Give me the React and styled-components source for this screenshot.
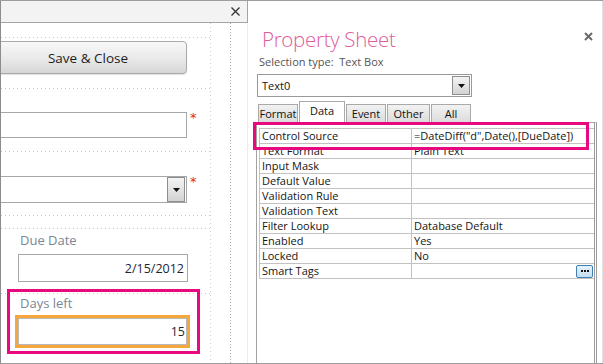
import React from "react";
import styled, { createGlobalStyle } from "styled-components";

const Global = createGlobalStyle`
  html, body { margin: 0; padding: 0; background: #fff; overflow: hidden; }
  body { font-family: "Open Sans", "Noto Sans", sans-serif; color: #151515; }
  * { box-sizing: border-box; }
`;

const Frame = styled.div`
  position: relative;
  width: 603px;
  height: 364px;
  border-top: 1px solid #9d9d9d;
  border-bottom: 1px solid #9d9d9d;
  display: flex;
  overflow: hidden;
  background: #fff;
`;

/* ---------- left: form design surface ---------- */
const LeftPane = styled.div`
  width: 248px;
  flex-shrink: 0;
  border-left: 1px solid #8d8d8d;
  display: flex;
  flex-direction: column;
`;

const PaneBar = styled.div`
  height: 22px;
  flex-shrink: 0;
  background: #f3f3f3;
  border-bottom: 1px solid #a4a4a4;
  border-right: 1px solid #a4a4a4;
  display: flex;
  align-items: center;
  justify-content: flex-end;
  padding-right: 7px;
`;

const Design = styled.div`
  flex: 1;
  display: flex;
  overflow: hidden;
`;

const FormCol = styled.div`
  width: 209px;
  flex-shrink: 0;
  display: flex;
  flex-direction: column;
`;

const Gutter = styled.div`
  width: 21px;
  flex-shrink: 0;
  background-image:
    linear-gradient(to bottom, #cfcfcf 1px, transparent 1px),
    linear-gradient(to bottom, #a9a9a9 1px, transparent 1px);
  background-size: 1px 4px, 1px 3px;
  background-position: left top, right top;
  background-repeat: repeat-y;
`;

const Rest = styled.div`
  flex: 1;
  border-right: 1px solid #ededed;
`;

const Rule = styled.div`
  height: 1px;
  flex-shrink: 0;
  margin-top: ${(p) => p.$mt}px;
  background-image: linear-gradient(to right, #c9c9c9 1px, transparent 1px);
  background-size: 4px 1px;
  background-repeat: repeat-x;
`;

const CmdButton = styled.div`
  margin-top: ${(p) => p.$mt}px;
  margin-left: -6px;
  width: 192px;
  height: 33px;
  flex-shrink: 0;
  border: 1px solid #a9a9a9;
  border-radius: 4px;
  background: linear-gradient(#f8f8f8, #e9e9e9 55%, #d6d6d6);
  box-shadow: 0 1px 1px rgba(0, 0, 0, 0.12);
  display: flex;
  align-items: center;
  justify-content: center;
  padding-right: 6px;
  font-size: 13.5px;
  color: #1e1e1e;
`;

const FieldRow = styled.div`
  display: flex;
  align-items: flex-start;
  flex-shrink: 0;
  margin-top: ${(p) => p.$mt}px;
`;

const TextBox = styled.div`
  position: relative;
  margin-left: ${(p) => p.$ml}px;
  width: ${(p) => p.$w}px;
  height: ${(p) => p.$h}px;
  flex-shrink: 0;
  border: ${(p) => (p.$focused ? "3px solid #f6a73c" : "1px solid #a7a7a7")};
  box-shadow: ${(p) => (p.$focused ? "inset 0 0 0 1px #b9b9b9" : "none")};
  background: #fff;
  display: flex;
  align-items: center;
  justify-content: flex-end;
  padding-right: ${(p) => (p.$focused ? 2 : 3)}px;
  font-size: 12.5px;
  color: #1b2533;
`;

const DropBtn = styled.div`
  width: 18px;
  align-self: stretch;
  margin: ${(p) => p.$m || "0"};
  border: 1px solid #8e8e8e;
  background: linear-gradient(#f4f4f4, #d3d3d3);
  display: flex;
  align-items: center;
  justify-content: center;
`;

const Required = styled.span`
  margin-left: 3px;
  margin-top: -1px;
  font-size: 13px;
  line-height: 14px;
  color: #e8231f;
  font-family: "DejaVu Sans", sans-serif;
`;

const FieldLabel = styled.div`
  margin-top: ${(p) => p.$mt}px;
  margin-left: 19px;
  height: 16px;
  line-height: 16px;
  flex-shrink: 0;
  font-size: 13px;
  color: #7b8695;
`;

/* ---------- right: property sheet ---------- */
const RightPanel = styled.div`
  flex: 1;
  display: flex;
  flex-direction: column;
  padding: 0 5px 0 8px;
  border-right: 1px solid #e2e2e2;
  background: #fff;
`;

const Header = styled.div`
  display: flex;
  justify-content: space-between;
  align-items: flex-start;
  margin-top: 26px;
  padding-left: 6px;
`;

const Title = styled.div`
  font-family: "Open Sans", sans-serif;
  font-weight: 300;
  font-size: 20.5px;
  line-height: 25px;
  color: #de5b9c;
  letter-spacing: -0.3px;
`;

const CloseIcon = styled.svg`
  display: block;
  margin-top: ${(p) => p.$mt}px;
  margin-right: ${(p) => p.$mr}px;
`;

const Selection = styled.div`
  margin-top: 2px;
  padding-left: 3px;
  height: 16px;
  line-height: 16px;
  font-size: 11px;
  color: #555;
  white-space: pre;
`;

const ObjectSelect = styled.div`
  margin-top: 4px;
  margin-left: 1px;
  width: 215px;
  height: 23px;
  border: 1px solid #9a9a9a;
  display: flex;
  align-items: center;
  justify-content: space-between;
  padding-left: 4px;
  font-size: 11px;
  color: #111;
`;

const TabStrip = styled.div`
  margin-top: 4px;
  margin-left: 2px;
  height: 21px;
  display: flex;
  align-items: flex-end;
  gap: 1px;
  position: relative;
  z-index: 1;
`;

const Tab = styled.div`
  width: ${(p) => p.$w}px;
  height: ${(p) => (p.$active ? 22 : 18)}px;
  margin-bottom: ${(p) => (p.$active ? -1 : 0)}px;
  border: 1px solid #a9a9a9;
  border-bottom: none;
  background: ${(p) => (p.$active ? "#fff" : "linear-gradient(#f2f2f2, #dcdcdc)")};
  display: flex;
  justify-content: center;
  align-items: ${(p) => (p.$active ? "flex-start" : "center")};
  padding-top: ${(p) => (p.$active ? 2 : 1)}px;
  font-size: 11px;
  line-height: 14px;
  color: #111;
`;

const TabPage = styled.div`
  flex: 1;
  border-top: 1px solid #a3a3a3;
  border-left: 1px solid #a3a3a3;
  border-right: 3px double #9c9c9c;
  padding-top: 5px;
  padding-left: 2px;
`;

const Grid = styled.div`
  display: grid;
  grid-template-columns: 152px 1fr;
  border-top: 1px solid #c2c2c2;
  border-left: 1px solid #c2c2c2;
`;

const Cell = styled.div`
  height: 15px;
  border-bottom: 1px solid #c2c2c2;
  border-right: ${(p) => (p.$label ? "1px solid #c2c2c2" : "none")};
  display: flex;
  align-items: center;
  padding-left: 2px;
  font-size: 11px;
  line-height: 14px;
  color: #151515;
  white-space: nowrap;
`;

const BuildBtn = styled.div`
  width: 17px;
  height: 13px;
  margin-left: auto;
  margin-right: 1px;
  border: 1px solid #3f7fb3;
  border-radius: 2px;
  background: linear-gradient(#e6f2fb, #c4def3);
  display: flex;
  align-items: center;
  justify-content: center;
  gap: 1px;
`;

const Dot = styled.span`
  width: 2px;
  height: 2px;
  background: #111;
`;

const Highlight = styled.div`
  position: absolute;
  left: ${(p) => p.$x}px;
  top: ${(p) => p.$y}px;
  width: ${(p) => p.$w}px;
  height: ${(p) => p.$h}px;
  border: 3px solid #e8087f;
  pointer-events: none;
  z-index: 5;
`;

const Arrow = () => (
  <svg width="7" height="4" viewBox="0 0 7 4">
    <path d="M0 0h7L3.5 4z" fill="#111" />
  </svg>
);

const props = [
  ["Control Source", '=DateDiff("d",Date(),[DueDate])'],
  ["Text Format", "Plain Text"],
  ["Input Mask", ""],
  ["Default Value", ""],
  ["Validation Rule", ""],
  ["Validation Text", ""],
  ["Filter Lookup", "Database Default"],
  ["Enabled", "Yes"],
  ["Locked", "No"],
  ["Smart Tags", "", true],
];

const tabs = [
  ["Format", 40],
  ["Data", 46],
  ["Event", 40],
  ["Other", 43],
  ["All", 40],
];

export default function App() {
  return (
    <>
      <Global />
      <Frame>
        <LeftPane>
          <PaneBar>
            <CloseIcon width="9" height="9" viewBox="0 0 9 9" $mt={0} $mr={0}>
              <path d="M0.5 0.5l8 8M8.5 0.5l-8 8" stroke="#333" strokeWidth="1.3" />
            </CloseIcon>
          </PaneBar>
          <Design>
            <FormCol>
              <Rule $mt={14} />
              <CmdButton $mt={3}>Save &amp; Close</CmdButton>
              <Rule $mt={14} />
              <FieldRow $mt={23}>
                <TextBox $ml={-2} $w={188} $h={26} />
                <Required>*</Required>
              </FieldRow>
              <Rule $mt={13} />
              <FieldRow $mt={24}>
                <TextBox $ml={-2} $w={188} $h={27}>
                  <DropBtn $m="0 -2px 0 0">
                    <Arrow />
                  </DropBtn>
                </TextBox>
                <Required>*</Required>
              </FieldRow>
              <Rule $mt={12} />
              <Rule $mt={12} />
              <FieldLabel $mt={3}>Due Date</FieldLabel>
              <FieldRow $mt={6}>
                <TextBox $ml={17} $w={170} $h={28}>2/15/2012</TextBox>
              </FieldRow>
              <Rule $mt={11} />
              <FieldLabel $mt={1}>Days left</FieldLabel>
              <FieldRow $mt={4}>
                <TextBox $ml={14} $w={175} $h={33} $focused>
                  15
                </TextBox>
              </FieldRow>
            </FormCol>
            <Gutter />
            <Rest />
          </Design>
        </LeftPane>

        <RightPanel>
          <Header>
            <Title>Property Sheet</Title>
            <CloseIcon width="9" height="9" viewBox="0 0 9 9" $mt={5} $mr={4}>
              <path d="M1 1l7 7M8 1l-7 7" stroke="#6a6a6a" strokeWidth="2" />
            </CloseIcon>
          </Header>
          <Selection>{"Selection type:  Text Box"}</Selection>
          <ObjectSelect>
            Text0
            <DropBtn $m="1px 1px 1px 0">
              <Arrow />
            </DropBtn>
          </ObjectSelect>
          <TabStrip>
            {tabs.map(([t, w]) => (
              <Tab key={t} $w={w} $active={t === "Data"}>
                {t}
              </Tab>
            ))}
          </TabStrip>
          <TabPage>
            <Grid>
              {props.map(([k, v, build]) => (
                <React.Fragment key={k}>
                  <Cell $label>{k}</Cell>
                  <Cell>
                    {v}
                    {build && (
                      <BuildBtn>
                        <Dot />
                        <Dot />
                        <Dot />
                      </BuildBtn>
                    )}
                  </Cell>
                </React.Fragment>
              ))}
            </Grid>
          </TabPage>
        </RightPanel>

        <Highlight $x={253} $y={121} $w={336} $h={28} />
        <Highlight $x={7} $y={288} $w={193} $h={65} />
      </Frame>
    </>
  );
}
